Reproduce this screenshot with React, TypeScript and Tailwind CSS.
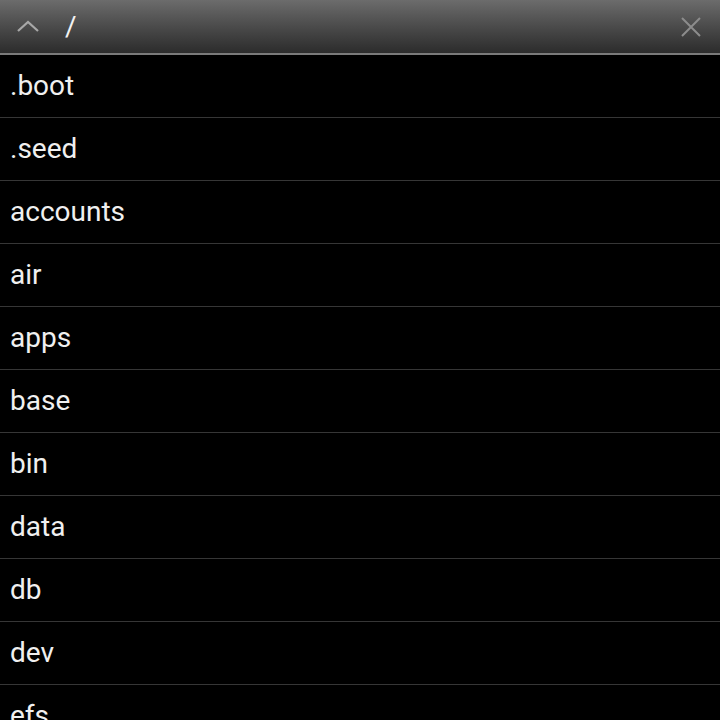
import React from "react";

const entries = [
  ".boot",
  ".seed",
  "accounts",
  "air",
  "apps",
  "base",
  "bin",
  "data",
  "db",
  "dev",
  "efs",
  "etc",
];

export default function App() {
  return (
    <div
      className="flex h-[720px] w-[720px] flex-col overflow-hidden bg-black"
      style={{ fontFamily: "Roboto, 'Noto Sans', sans-serif" }}
    >
      <div className="flex h-[55px] shrink-0 items-center border-b-2 border-[#7a7a7a] bg-gradient-to-b from-[#6c6c6c] to-[#2c2c2c] px-[16px]">
        <svg width="24" height="14" viewBox="0 0 24 14" className="mt-[-1px]">
          <path d="M2 12 L12 3 L22 12" fill="none" stroke="#a8a8a8" strokeWidth="2.2" />
        </svg>
        <span className="ml-[25px] text-[28px] leading-none text-[#f2f2f2]">/</span>
        <div className="flex-1" />
        <svg width="22" height="22" viewBox="0 0 22 22" className="mr-[2px] mt-[1px]">
          <path d="M2 2 L20 20 M20 2 L2 20" fill="none" stroke="#8c8c8c" strokeWidth="2" />
        </svg>
      </div>
      <div className="flex flex-col">
        {entries.map((name) => (
          <div
            key={name}
            className="flex h-[63px] shrink-0 items-center border-b border-[#363636] pl-[10px] text-[28px] text-[#f0f0f0]"
          >
            {name}
          </div>
        ))}
      </div>
    </div>
  );
}
